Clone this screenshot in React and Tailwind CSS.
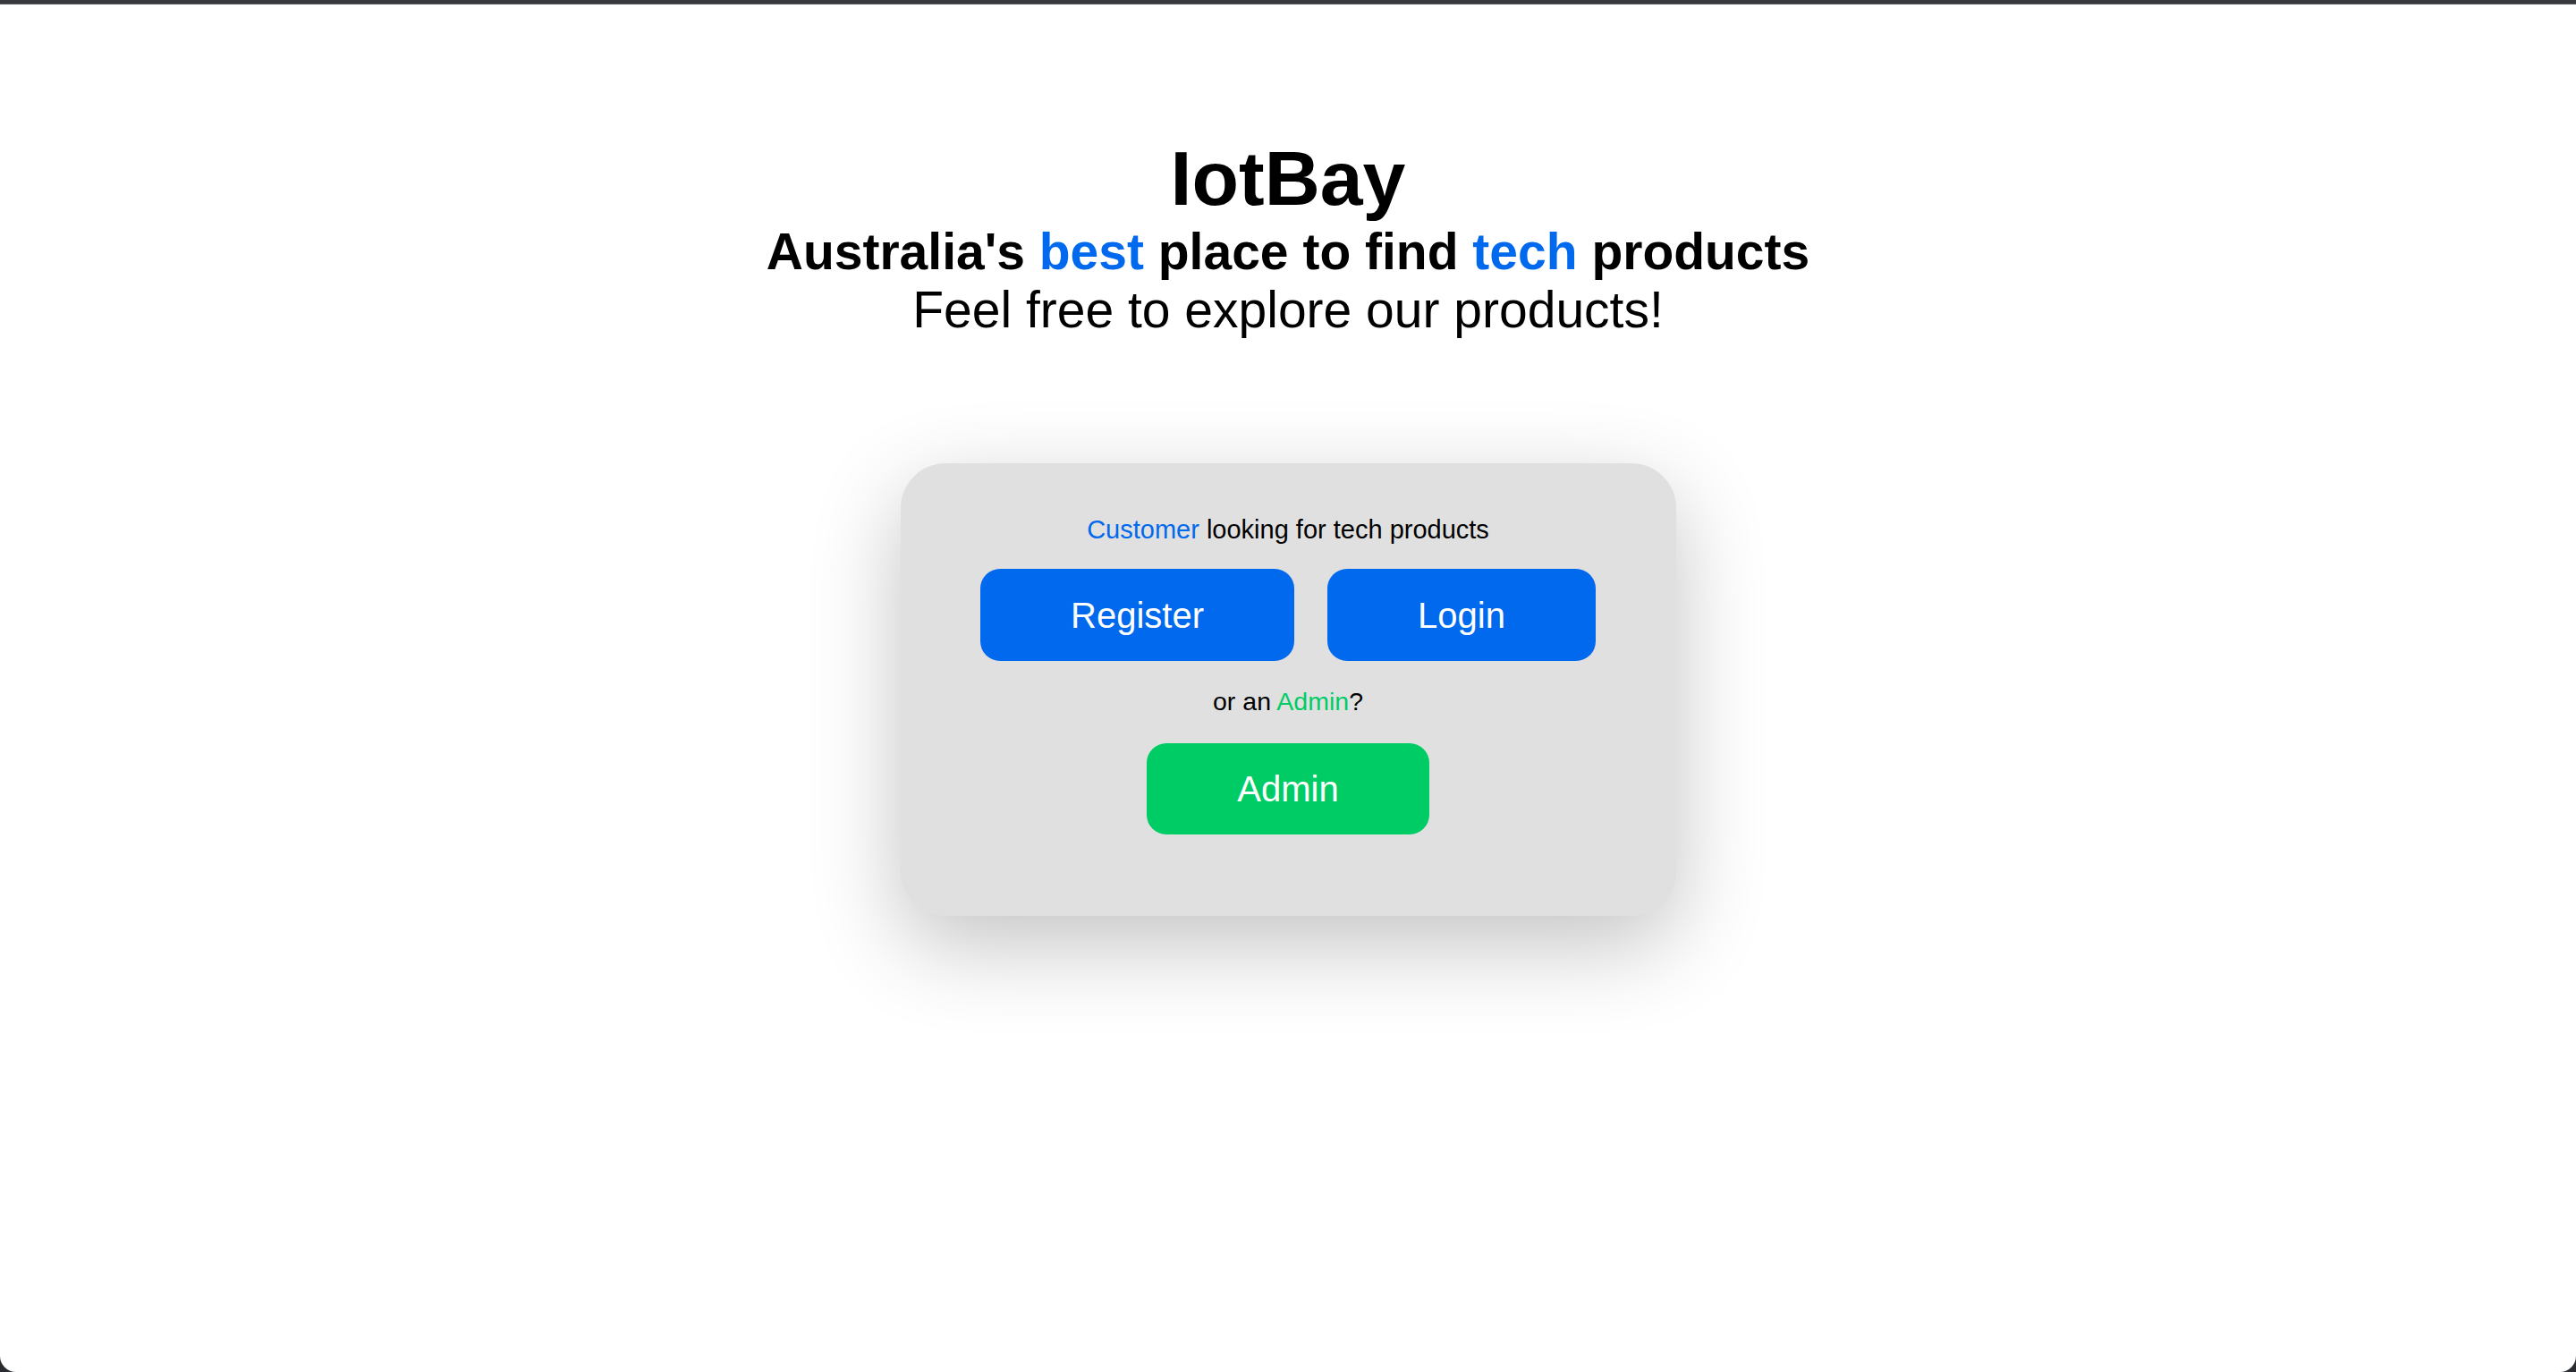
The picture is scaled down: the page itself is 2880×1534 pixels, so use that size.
import React from "react";

const App = () => {
  return (
    <div className="min-h-screen bg-[#2b2c31] flex flex-col font-['Liberation_Sans',Arial,sans-serif]">
      <div className="h-[5px] bg-[#37383d] border-b border-[#55565a]" />
      <div className="flex-1 bg-white rounded-b-[18px] flex flex-col items-center text-black">
        <header className="flex flex-col items-center text-center mt-[145px]">
          <h1 className="text-[86px] font-bold leading-[99px]">IotBay</h1>
          <h2 className="text-[57px] font-bold leading-[65px]">
            Australia's <span className="text-[#0069ed]">best</span> place to find{" "}
            <span className="text-[#0069ed]">tech</span> products
          </h2>
          <p className="text-[57px] leading-[65px]">Feel free to explore our products!</p>
        </header>

        <main className="mt-[139px] w-[867px] h-[506px] bg-[#e0e0e0] rounded-[50px] shadow-[0_32px_100px_rgba(0,0,0,0.24)] flex flex-col items-center pt-[58px]">
          <p className="text-[29px] leading-[33px]">
            <span className="text-[#0069ed]">Customer</span> looking for tech products
          </p>
          <div className="flex gap-[37px] mt-[27px]">
            <button className="h-[103px] px-[101px] bg-[#0069ed] text-white text-[40px] rounded-[22px]">
              Register
            </button>
            <button className="h-[103px] px-[101px] bg-[#0069ed] text-white text-[40px] rounded-[22px]">
              Login
            </button>
          </div>
          <p className="text-[28.5px] leading-[33px] mt-[29px]">
            or an <span className="text-[#00cc66]">Admin</span>?
          </p>
          <button className="mt-[30px] h-[102px] px-[101px] bg-[#00cc66] text-white text-[40px] rounded-[22px]">
            Admin
          </button>
        </main>
      </div>
    </div>
  );
};

export default App;
